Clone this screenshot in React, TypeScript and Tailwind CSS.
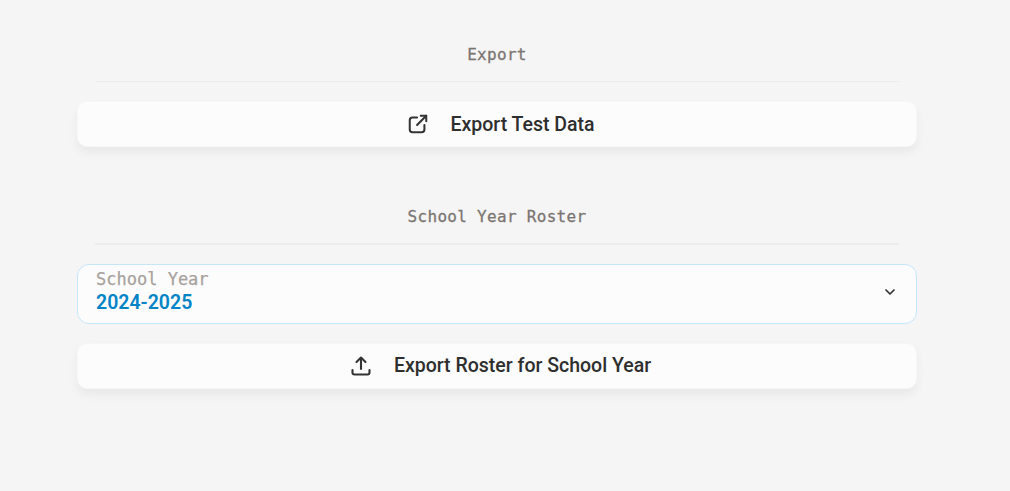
import { ChevronDown } from 'lucide-react';

function SectionHeading({ title, className }: { title: string; className: string }) {
  return (
    <div className={`mx-[18px] flex flex-col items-center border-[#ececec] ${className}`}>
      <h2 className="text-[16px] leading-[24px] tracking-[0.3px] text-[#7c7672] [-webkit-text-stroke:0.3px_#7c7672] [font-family:'DejaVu_Sans_Mono',monospace]">
        {title}
      </h2>
    </div>
  );
}

function ExportButton({ label, icon, className }: { label: string; icon: React.ReactNode; className: string }) {
  return (
    <button className={`flex h-[45.5px] w-full items-center justify-center rounded-[10px] border border-[#f7f7f7] bg-[#fcfcfc] text-[19.5px] font-medium text-[#2e2e2e] shadow-[0_6px_10px_rgba(0,0,0,0.05)] [font-family:Roboto,sans-serif] ${className}`}>
      {icon}
      <span>{label}</span>
    </button>
  );
}

export default function App() {
  return (
    <div className="min-h-[491px] bg-[#f5f5f5] pt-[43px]">
      <div className="mx-[77px] w-[840px]">
        <SectionHeading title="Export" className="border-b pb-[14px]" />
        <div className="mt-[19px]">
          <ExportButton
            label="Export Test Data"
            className="gap-[21px] pt-[1px] pl-[8px]"
            icon={
              <svg viewBox="0 0 24 24" className="h-[22px] w-[22px] text-[#333333]" fill="none" stroke="currentColor" strokeWidth="2.2" strokeLinecap="round" strokeLinejoin="round">
                <path d="M11 5H6a3 3 0 0 0-3 3v10a3 3 0 0 0 3 3h10a3 3 0 0 0 3-3v-5" />
                <path d="M11 13 21 3" />
                <path d="M15 3h6v6" />
              </svg>
            }
          />
        </div>

        <SectionHeading title="School Year Roster" className="mt-[58.5px] border-b-2 pb-[14px]" />

        <div className="mt-[18.5px] flex h-[60px] items-center justify-between rounded-[12px] border border-[#c5e6f9] bg-[#fcfcfc] pr-[18px] pb-[3px] pl-[18px]">
          <div className="flex flex-col">
            <span className="text-[17px] leading-[22px] text-[#a8a29e] [-webkit-text-stroke:0.25px_#a8a29e] [font-family:'DejaVu_Sans_Mono',monospace]">
              School Year
            </span>
            <span className="text-[19.5px] leading-[26px] font-semibold text-[#0284c7] [font-family:Roboto,sans-serif]">
              2024-2025
            </span>
          </div>
          <ChevronDown className="h-[16px] w-[16px] text-[#333333]" strokeWidth={2.6} />
        </div>

        <div className="mt-[19.5px]">
          <ExportButton
            label="Export Roster for School Year"
            className="gap-[21px] pl-[6px]"
            icon={
              <svg viewBox="0 0 24 24" className="h-[24px] w-[24px] text-[#333333]" fill="none" stroke="currentColor" strokeWidth="2.1" strokeLinecap="round" strokeLinejoin="round">
                <path d="M12 15V4" />
                <path d="M7.5 8 12 3.5 16.5 8" />
                <path d="M3.5 16v2.5A2 2 0 0 0 5.5 20.5h13a2 2 0 0 0 2-2V16" />
              </svg>
            }
          />
        </div>
      </div>
    </div>
  );
}
